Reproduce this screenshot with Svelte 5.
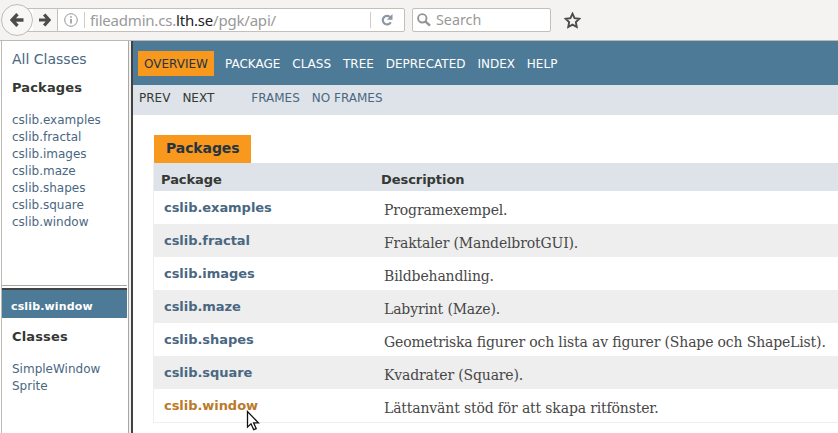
<script>
  const packages = [
    ['cslib.examples', 'Programexempel.'],
    ['cslib.fractal', 'Fraktaler (MandelbrotGUI).'],
    ['cslib.images', 'Bildbehandling.'],
    ['cslib.maze', 'Labyrint (Maze).'],
    ['cslib.shapes', 'Geometriska figurer och lista av figurer (Shape och ShapeList).'],
    ['cslib.square', 'Kvadrater (Square).'],
    ['cslib.window', 'Lättanvänt stöd för att skapa ritfönster.']
  ];
  const classes = ['SimpleWindow', 'Sprite'];
  const nav = ['PACKAGE', 'CLASS', 'TREE', 'DEPRECATED', 'INDEX', 'HELP'];
  const active = 'cslib.window';
</script>

<div class="browser">
  <header class="toolbar">
    <div class="address">
      <div class="back">
        <svg width="14" height="14" viewBox="0 0 14 14"><path d="M7.500 1.200 2 7l5.500 5.800M2.500 7H13.500" fill="none" stroke="#4c4c4c" stroke-width="3.300" /></svg>
      </div>
      <div class="forward">
        <svg width="12" height="14" viewBox="0 0 12 14"><path d="M5.200 1.500 10 7 5.200 12.500M9.500 7H0" fill="none" stroke="#4c4c4c" stroke-width="3.200" /></svg>
      </div>
      <svg class="info" width="14" height="14" viewBox="0 0 14 14"><circle cx="7" cy="7" r="6.300" fill="none" stroke="#969696" /><path d="M7 6v4.500M7 3.200v1.600" stroke="#969696" stroke-width="1.600" /></svg>
      <span class="divider"></span>
      <span class="url">fileadmin.cs.<b>lth.se</b>/pgk/api/</span>
      <span class="divider reload-divider"></span>
      <svg class="reload" width="12" height="12" viewBox="0 0 12 12"><path d="M9.200 3.100A4.300 4.300 0 1 0 9.800 8.300" fill="none" stroke="#8b98a3" stroke-width="2.200" /><path d="M11.500 0v5.700H5.800z" fill="#8b98a3" /></svg>
    </div>
    <div class="search">
      <svg width="14" height="14" viewBox="0 0 14 14"><circle cx="5.300" cy="5.300" r="4.200" fill="none" stroke="#949494" stroke-width="1.900" /><path d="m8.300 8.300 4.700 4.400" stroke="#949494" stroke-width="2.400" /></svg>
      <span>Search</span>
    </div>
    <svg class="star" width="17" height="17" viewBox="0 0 17 17"><path d="m8.500 1.700 2.050 4.500 4.850.6-3.550 3.350.9 4.850-4.250-2.400L4.250 15l.9-4.850L1.600 6.800l4.850-.6z" fill="none" stroke="#4c4c4c" stroke-width="1.900" /></svg>
  </header>

  <div class="frames">
    <aside>
      <section class="package-list">
        <a class="all">All Classes</a>
        <h2>Packages</h2>
        <ul>
          {#each packages as [name]}<li>{name}</li>{/each}
        </ul>
      </section>
      <section class="class-list">
        <h1>{active}</h1>
        <h2>Classes</h2>
        <ul>
          {#each classes as name}<li>{name}</li>{/each}
        </ul>
      </section>
    </aside>
    <div class="splitter"></div>
    <main>
      <nav class="top">
        <span class="current">OVERVIEW</span>
        {#each nav as item}<a>{item}</a>{/each}
      </nav>
      <nav class="sub">
        <span>PREV</span><span>NEXT</span><a class="frames-link">FRAMES</a><a>NO FRAMES</a>
      </nav>
      <div class="summary">
        <div class="caption">Packages</div>
        <div class="table">
          <div class="row head"><span>Package</span><span>Description</span></div>
          {#each packages as [name, description]}
            <div class="row">
              <a class:hover={name === active}>{name}</a>
              <span class="description">{description}</span>
            </div>
          {/each}
        </div>
      </div>
    </main>
  </div>
  <svg class="cursor" width="14" height="22" viewBox="0 0 14 22"><path d="M1.500 1.500v15.600l3.500-3.300 2.700 5.900 2.500-1.100-2.600-5.800h4.800z" fill="#fff" stroke="#111" stroke-width="1.300" /></svg>
</div>

<style>
  .browser { position: relative; width: 838px; height: 433px; overflow: hidden; display: flex; flex-direction: column; background: #fff; color: #353833; font-family: "DejaVu Sans", sans-serif; font-size: 12px; }
  .toolbar { box-sizing: border-box; height: 41px; flex: none; display: flex; align-items: flex-start; padding-top: 8px; background: #f4f3f1; border-bottom: 1px solid #bdbab5; font-family: "Noto Sans", sans-serif; font-size: 15px; color: #999; }
  .address { box-sizing: border-box; width: 388px; height: 24px; margin-left: 17px; display: flex; align-items: center; background: #fff; border: 1px solid #c3c0bc; border-radius: 2px; }
  .back { box-sizing: border-box; flex: none; width: 32px; height: 32px; margin-left: -17px; display: flex; align-items: center; justify-content: center; background: #f8f7f6; border: 1px solid #bfbcb8; border-radius: 50%; }
  .forward { box-sizing: border-box; flex: none; width: 25px; height: 22px; padding-left: 6px; display: flex; align-items: center; background: #f7f6f5; border-right: 1px solid #c3c0bc; }
  .info { flex: none; margin-left: 6px; }
  .divider { flex: none; width: 1px; height: 16px; margin-left: 6px; background: #ccc; }
  .url { margin-left: 5px; line-height: 20px; letter-spacing: -0.2px; white-space: nowrap; }
  .url b { color: #222; font-weight: 400; }
  .reload-divider { margin-left: auto; }
  .reload { flex: none; margin: 0 11px 0 10px; }
  .search { box-sizing: border-box; width: 139px; height: 24px; margin-left: 7px; padding-left: 4px; display: flex; align-items: center; gap: 5px; background: #fff; border: 1px solid #c3c0bc; border-radius: 2px; font-size: 14.300px; line-height: 20px; }
  .star { margin: 4px 0 0 13px; }
  .frames { flex: 1; display: flex; min-height: 0; }
  aside { box-sizing: border-box; flex: none; width: 126px; border-left: 1px solid #bebbb7; margin: 0 1px; display: flex; flex-direction: column; }
  .package-list { box-sizing: border-box; height: 245px; padding: 8px 0 0 10px; border-bottom: 1px solid #aaa7a2; }
  .all { display: block; font-size: 14px; line-height: 20px; color: #4a6782; }
  h2 { margin: 0; font-size: 13px; line-height: 16px; letter-spacing: 0.15px; }
  .package-list h2 { margin-top: 11px; }
  ul { list-style: none; margin: 0; padding: 0; color: #4a6782; line-height: 17px; }
  .package-list ul { margin-top: 16px; }
  .class-list { margin-top: 2px; border-top: 2px solid #404244; }
  h1 { box-sizing: border-box; margin: 0; height: 28px; padding: 9px 0 0 9px; background: #4d7a97; color: #fff; font-size: 11px; line-height: 16px; letter-spacing: 0.15px; }
  .class-list h2 { margin: 11px 0 16px 10px; }
  .class-list ul { margin-left: 10px; }
  .splitter { box-sizing: border-box; flex: none; width: 5px; border-left: 1px solid #aaa7a2; border-right: 2px solid #404244; background: #f2f1f0; }
  main { flex: 1; min-width: 0; }
  .top { box-sizing: border-box; height: 44px; padding: 10px 0 0 5px; display: flex; background: #4d7a97; color: #fff; line-height: 27px; }
  .current { box-sizing: border-box; width: 76px; height: 25px; padding-left: 6px; margin-right: 11px; background: #f8981d; color: #253441; }
  .top a { margin-right: 11.900px; }
  .sub { box-sizing: border-box; height: 30px; padding: 5px 0 0 6px; display: flex; gap: 12px; background: #dee3e9; line-height: 16px; }
  .sub a { color: #4a6782; }
  .sub .frames-link { margin-left: 25px; }
  .summary { padding: 20px 0 0 20px; }
  .caption { width: 97px; height: 28px; margin-left: 1px; box-sizing: border-box; padding-left: 12px; background: #f8981d; color: #253441; font-size: 14px; font-weight: 700; line-height: 27px; letter-spacing: -0.1px; }
  .table { border: 1px solid #eee; border-width: 0 0 1px 1px; }
  .row { display: grid; grid-template-columns: 220px 1fr; height: 33px; padding-left: 10px; box-sizing: border-box; }
  .row:nth-child(odd):not(.head) { background: #eee; }
  .row a { color: #4a6782; font-size: 13px; font-weight: 700; line-height: 33px; letter-spacing: -0.05px; }
  .row a.hover { color: #bb7a2a; }
  .description { color: #474747; font-family: "DejaVu Serif", serif; font-size: 14px; line-height: 39px; letter-spacing: -0.155px; font-feature-settings: "liga" 1; white-space: nowrap; }
  .row.head { height: 28px; padding-left: 7px; background: #dee3e9; font-size: 13px; font-weight: 700; line-height: 33px; }
  .row.head span { letter-spacing: -0.05px; }
  .cursor { position: absolute; left: 246px; top: 410px; }
</style>
